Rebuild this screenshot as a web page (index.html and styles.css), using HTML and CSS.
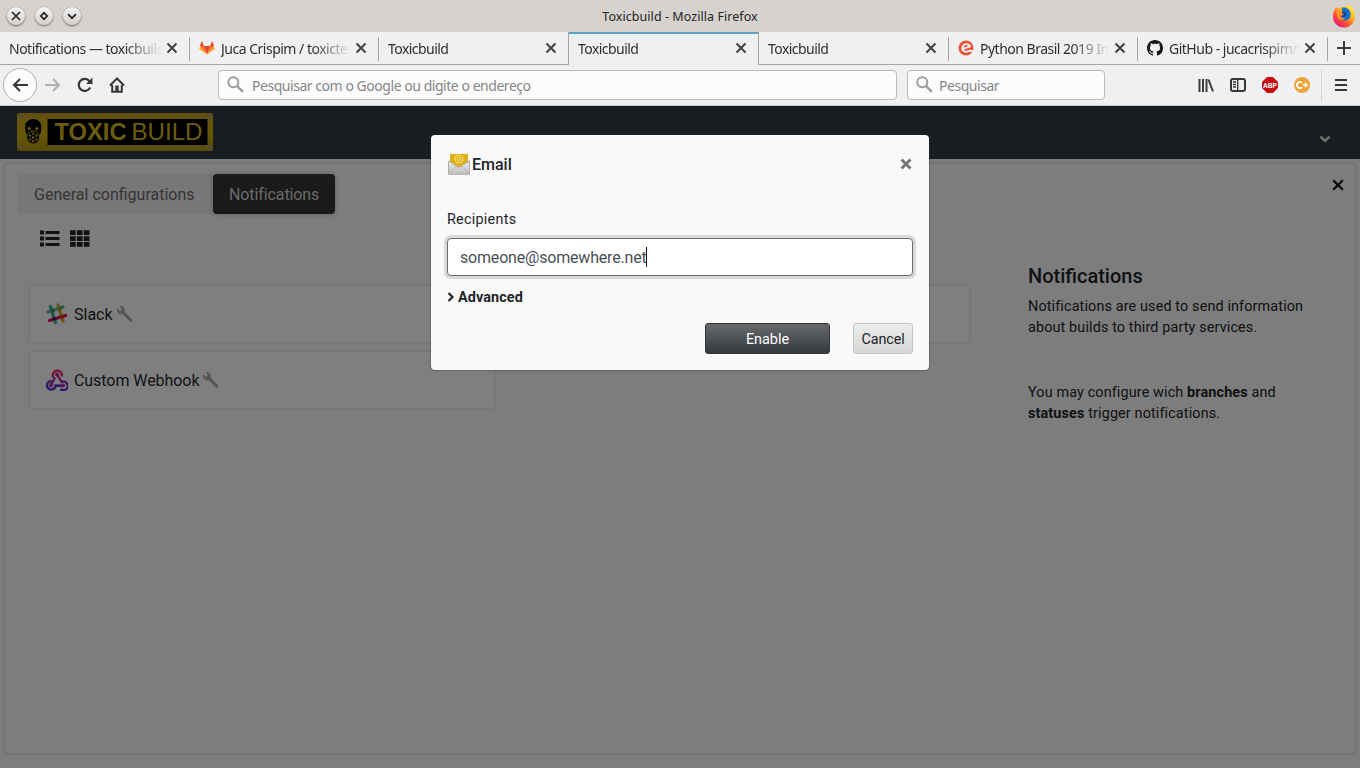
FILE: index.html
```
<!DOCTYPE html>
<html lang="en">
<head>
<meta charset="utf-8">
<title>Toxicbuild</title>
<link rel="stylesheet" href="styles.css">
</head>
<body>
<svg class="defs" aria-hidden="true">
  <defs>
    <symbol id="x" viewBox="0 0 12 12"><path d="M1.500 1.500l9 9M10.500 1.500l-9 9" fill="none" stroke="#3c3d3f" stroke-width="1.900"/></symbol>
    <symbol id="search" viewBox="0 0 18 18"><circle cx="6.300" cy="6.300" r="5" fill="none" stroke="#9b9c9d" stroke-width="2"/><path d="M9.900 9.900l6 6" stroke="#9b9c9d" stroke-width="2.400"/></symbol>
    <symbol id="wrench" viewBox="0 0 512 512"><path fill="#aaa" d="M17.500 110c-24-62-4-80 0-90l70 70 50-15 12-48-70-70c64-16 112 5 142 42 30 40 36 80 20 130l225 225c40 40-25 105-65 65L177 193c-60 23-130 0-160-83z" transform="translate(20 50)"/></symbol>
  </defs>
</svg>
<div class="screen">
  <header class="titlebar">
    <div class="wm">
      <span class="wm-btn"><svg width="10" height="10"><path d="M1 1l8 8M9 1l-8 8"/></svg></span>
      <span class="wm-btn"><svg width="10" height="10"><path d="M5 1.800L8.200 5 5 8.200 1.800 5z"/></svg></span>
      <span class="wm-btn"><svg width="10" height="10"><path d="M1 3.200l4 4 4-4"/></svg></span>
    </div>
    <span class="title">Toxicbuild - Mozilla Firefox</span>
    <svg class="firefox" width="24" height="24" viewBox="0 0 24 24">
      <defs><linearGradient id="fx" x1=".9" y1=".05" x2=".2" y2=".95"><stop offset="0" stop-color="#fff04a"/><stop offset=".4" stop-color="#ffb01f"/><stop offset=".7" stop-color="#ff4a33"/><stop offset="1" stop-color="#e31587"/></linearGradient></defs>
      <path fill="url(#fx)" d="M2.500 5.500L4 2.800l2 2C8 3 10 2.500 12.500 2.500L17 1.200c3.500 2 6 6 6 11A11 11 0 0 1 1 13c0-3 .5-5 1.500-7.500z"/>
      <path fill="#1470cf" d="M10 4c3-1.500 8 1 8.500 5.500.5 4-2 7-6 7-3 0-5-2-5-4l4 .5 1.500-2-3-1.500z"/>
      <path fill="#173f91" d="M9 7.500c3-1 5 .5 5.500 3l-2 2.500-4-.500 3.500-2z"/>
      <path fill="#ff9427" d="M4 6.500c2-1 5-.5 6.500.5L10 9 8 10.500c0 3 2 4 5 3.500-2 3-6 2-7.500-.5z"/>
    </svg>
  </header>
  <nav class="tabs">
    <div class="tab"><span class="tab-name">Notifications — toxicbuild</span><svg class="tx"><use href="#x"/></svg></div>
    <div class="tab"><svg class="fav" viewBox="0 0 16 16"><path fill="#e24329" d="M8 14.500L4.800 6h6.400z"/><path fill="#fc6d26" d="M8 14.500L1 6h4zM8 14.500L15 6h-4z"/><path fill="#fca326" d="M8 14.500L.2 9 1 6zM8 14.500L15.800 9 15 6z"/><path fill="#e24329" d="M1 6l1.800-5L5 6zM15 6l-1.800-5L11 6z"/></svg><span class="tab-name">Juca Crispim / toxicte</span><svg class="tx"><use href="#x"/></svg></div>
    <div class="tab"><span class="tab-name full">Toxicbuild</span><svg class="tx"><use href="#x"/></svg></div>
    <div class="tab active"><span class="tab-name full">Toxicbuild</span><svg class="tx"><use href="#x"/></svg></div>
    <div class="tab"><span class="tab-name full">Toxicbuild</span><svg class="tx"><use href="#x"/></svg></div>
    <div class="tab"><svg class="fav" viewBox="0 0 16 16"><circle cx="8" cy="8" r="7.500" fill="#ec5138"/><path d="M4 9.200L12 6.500C11 3.500 6 3 4.500 7 3.500 11.500 8 13 12 10.500l3 1" fill="none" stroke="#eff0f1" stroke-width="1.900"/></svg><span class="tab-name">Python Brasil 2019 In</span><svg class="tx"><use href="#x"/></svg></div>
    <div class="tab"><svg class="fav" viewBox="0 0 16 16"><path fill="#17181a" d="M8 0C3.580 0 0 3.580 0 8c0 3.540 2.290 6.530 5.470 7.590.4.070.55-.17.55-.38 0-.19-.01-.82-.01-1.490-2.010.37-2.530-.49-2.690-.94-.09-.23-.48-.94-.82-1.130-.28-.15-.68-.52-.01-.53.63-.01 1.080.58 1.230.82.72 1.210 1.870.87 2.330.66.07-.52.28-.87.51-1.070-1.780-.2-3.640-.89-3.640-3.950 0-.87.31-1.590.82-2.150-.08-.2-.36-1.020.08-2.120 0 0 .67-.21 2.200.82.64-.18 1.320-.27 2-.27s1.360.09 2 .27c1.530-1.040 2.200-.82 2.200-.82.44 1.100.16 1.920.08 2.120.51.56.82 1.270.82 2.150 0 3.070-1.870 3.750-3.650 3.950.29.25.54.73.54 1.480 0 1.070-.01 1.930-.01 2.200 0 .21.15.46.55.38A8 8 0 0 0 16 8c0-4.420-3.580-8-8-8z"/></svg><span class="tab-name">GitHub - jucacrispim/t</span><svg class="tx"><use href="#x"/></svg></div>
    <div class="plus"><svg width="14" height="14"><path d="M7 0v14M0 7h14" stroke="#3c3d3f" stroke-width="2"/></svg></div>
  </nav>
  <div class="toolbar">
    <span class="back"><svg width="16" height="14"><path d="M8 1L2 7l6 6M2 7h14" fill="none" stroke="#353638" stroke-width="2"/></svg></span>
    <svg class="fwd" width="16" height="14"><path d="M8 1l6 6-6 6M14 7H0" fill="none" stroke="#aeafb0" stroke-width="2"/></svg>
    <svg class="reload" width="16" height="16"><path d="M13.200 10.500A6 6 0 1 1 12.500 4.200" fill="none" stroke="#353638" stroke-width="2.200"/><path d="M15.500.5V7H9z" fill="#353638"/></svg>
    <svg class="home" width="16" height="16"><path d="M1 8.500L8 1.500l7 7M3.200 8v6.800h9.600V8" fill="none" stroke="#353638" stroke-width="2"/><path d="M6.300 8.500h3.400V14H6.300z" fill="#353638"/></svg>
    <div class="field url"><svg width="18" height="18"><use href="#search"/></svg><span>Pesquisar com o Google ou digite o endereço</span></div>
    <div class="field find"><svg width="18" height="18"><use href="#search"/></svg><span>Pesquisar</span></div>
    <div class="tools">
      <svg width="16" height="16"><path d="M1.500 2v13M5 2v13M8.500 2v13M10.500 2.500l4.500 12" fill="none" stroke="#3c3d3f" stroke-width="2"/></svg>
      <svg width="16" height="16"><rect x="1" y="2" width="14" height="12" rx="2" fill="none" stroke="#353638" stroke-width="2"/><path d="M7.700 2v12M3 5h3M3 7.500h3M3 10h3" stroke="#353638" stroke-width="1.400"/></svg>
      <svg width="16" height="16"><path d="M5 0h6l5 5v6l-5 5H5l-5-5V5z" fill="#c70d12"/><text class="abp" x="1" y="11" textLength="14" lengthAdjust="spacingAndGlyphs">ABP</text></svg>
      <svg width="16" height="16"><circle cx="8" cy="8" r="8" fill="#eca33c"/><path d="M8 5.800A3 3 0 1 0 8 10.200M9 8h5M11.500 5.800v4.400" fill="none" stroke="#fff" stroke-width="1.600"/></svg>
    </div>
    <div class="menu"><svg width="12" height="12"><path d="M0 1h12M0 6h12M0 11h12" stroke="#353638" stroke-width="2"/></svg></div>
  </div>
  <main class="page">
    <div class="navbar">
      <svg class="logo" width="196" height="38" viewBox="0 0 196 38">
        <defs><linearGradient id="gold" x2="0" y2="1"><stop offset="0" stop-color="#c19c26"/><stop offset=".5" stop-color="#d4b40c"/><stop offset="1" stop-color="#b09414"/></linearGradient></defs>
        <rect width="196" height="38" rx="2" fill="url(#gold)"/>
        <rect x="30.500" y="6" width="160" height="26"/>
        <g fill="#a39b80"><circle cx="4" cy="4" r="2"/><circle cx="4" cy="34" r="2"/><circle cx="192" cy="4" r="2"/><circle cx="192" cy="34" r="2"/></g>
        <path d="M8 14c0-5 4-8 8.300-8s8.200 3 8.200 8c0 4-1 7-2.500 9-1 4-3 8-5.700 8s-5-4-5.800-8C9 21 8 18 8 14z"/>
        <circle cx="12.300" cy="15.500" r="1.600" fill="#d2b80b"/><circle cx="19.800" cy="15.500" r="1.600" fill="#d2b80b"/>
        <circle cx="16.200" cy="24.500" r="6.500" stroke="#c2a80b"/>
        <g fill="#c2a80b"><circle cx="16.200" cy="24.500" r="1.300"/><circle cx="13" cy="22.500" r="1.200"/><circle cx="19.400" cy="22.500" r="1.200"/><circle cx="13" cy="26.500" r="1.200"/><circle cx="19.400" cy="26.500" r="1.200"/><circle cx="16.200" cy="20.800" r="1.200"/><circle cx="16.200" cy="28.200" r="1.200"/></g>
        <text class="lg b" x="37.500" y="27.300" textLength="72" lengthAdjust="spacingAndGlyphs">TOXIC</text>
        <text class="lg" x="114.500" y="27.300" textLength="71" lengthAdjust="spacingAndGlyphs">BUILD</text>
      </svg>
      <svg class="chev" width="12" height="8"><path d="M1.500 1.500L6 6l4.500-4.500" fill="none" stroke="#d8dadb" stroke-width="2.600"/></svg>
    </div>
    <section class="panel">
      <div class="left">
        <div class="pills"><span class="pill">General configurations</span><span class="pill on">Notifications</span></div>
        <div class="views">
          <svg width="20" height="17"><path d="M0 .5h4v4H0zM0 6.500h4v4H0zM0 12.500h4v4H0zM5.500 1h14v3h-14zM5.500 7h14v3h-14zM5.500 13h14v3h-14z"/></svg>
          <svg width="20" height="17"><path d="M0 .3h5.700v4.700H0zM6.900.3h5.700v4.700H6.900zM13.800.3h5.700v4.700h-5.700zM0 6.200h5.700v4.700H0zM6.900 6.200h5.700v4.700H6.900zM13.800 6.200h5.700v4.700h-5.700zM0 12.100h5.700v4.700H0zM6.900 12.100h5.700v4.700H6.900zM13.800 12.100h5.700v4.700h-5.700z"/></svg>
        </div>
        <div class="cards">
          <div class="card">
            <svg width="22" height="22" viewBox="0 0 22 22"><g fill="none" stroke-width="3.400" stroke-linecap="round"><path d="M4.500 3.500l5 16" stroke="#3eb890"/><path d="M12 2l5 16" stroke="#e0a82e"/><path d="M2 9l15-5" stroke="#62bda0"/><path d="M3.500 17.500l16-5" stroke="#d41758"/></g><path d="M6 14.800l3-1 1 3-3 1z" fill="#4d1d50"/><path d="M13.500 12.500l3-1 1 3-3 1z" fill="#d5352a"/><path d="M4.800 6.600l2.800-.9 1 3-2.900.9z" fill="#24887a"/><path d="M12.300 4.200l2.900-.9 1 3-2.900.9z" fill="#7a9c3e"/></svg>
            <span>Slack</span><svg class="wr"><use href="#wrench"/></svg>
          </div>
          <div class="card"></div>
          <div class="card">
            <svg width="22" height="22" viewBox="0 0 22 22"><defs><linearGradient id="wh" x2="0" y2="1"><stop offset=".15" stop-color="#ff2c70"/><stop offset=".75" stop-color="#5a35d6"/></linearGradient></defs><g fill="none" stroke="url(#wh)" stroke-width="2.400"><path d="M15.500 7.500A4.400 4.400 0 1 0 8.500 9.500L5 16M11 5.500l4.500 7.500A4.300 4.300 0 1 1 14.500 20M5.500 12A4.300 4.300 0 1 0 9.500 16.500L17 16.700"/></g><g fill="#b02ca8"><circle cx="11" cy="5.500" r="2"/><circle cx="5" cy="16.300" r="2"/><circle cx="17" cy="16.500" r="2"/></g></svg>
            <span class="hook">Custom Webhook</span><svg class="wr"><use href="#wrench"/></svg>
          </div>
        </div>
      </div>
      <aside class="help">
        <svg class="close" width="12" height="12"><path d="M1.200 1.200l9.600 9.600M10.800 1.200l-9.600 9.600" stroke="#111" stroke-width="2.300"/></svg>
        <h2>Notifications</h2>
        <p>Notifications are used to send information<br>about builds to third party services.</p>
        <p class="second">You may configure wich <b>branches</b> and<br><b>statuses</b> trigger notifications.</p>
      </aside>
    </section>
    <div class="backdrop">
      <div class="modal">
        <div class="mhead">
          <svg width="24" height="24" viewBox="0 0 24 24"><defs><linearGradient id="env" x2="0" y2="1"><stop offset="0" stop-color="#eee"/><stop offset="1" stop-color="#bdbdbd"/></linearGradient></defs><path d="M1 10L4 7h16l3 3v11.500q0 1-1 1H2q-1 0-1-1z" fill="#b5b5b5"/><path d="M3 2h18v10l-9 6-9-6z" fill="#e0b01c"/><circle cx="12" cy="7" r="4" fill="none" stroke="#f8dd70"/><circle cx="12" cy="7" r="1.600" fill="none" stroke="#f8dd70"/><path d="M1.500 9L12 15.500 22.500 9v13.300h-21z" fill="url(#env)" stroke="#aaa" stroke-width=".8"/><path d="M2 21.500l7.500-7.500M22 21.500L14.500 14" stroke="#aaa" stroke-width=".7"/></svg>
          <span>Email</span>
          <svg class="mx" width="12" height="12"><path d="M1.500 1.500l9 9M10.500 1.500l-9 9" stroke="#757575" stroke-width="2.900"/></svg>
        </div>
        <div class="label">Recipients</div>
        <div class="input"><span>someone@somewhere.net</span><i class="caret"></i></div>
        <div class="adv"><svg width="8" height="10"><path d="M1.500 1l4 4-4 4" fill="none" stroke="#212529" stroke-width="2.200"/></svg><span>Advanced</span></div>
        <div class="actions"><span class="btn dark">Enable</span><span class="btn light">Cancel</span></div>
      </div>
    </div>
  </main>
</div>
</body>
</html>
```
FILE: styles.css
```
* { box-sizing: border-box; }
body { margin: 0; font-family: Roboto, sans-serif; color: #212529; }
svg { display: block; flex: none; }
.defs { position: absolute; width: 0; height: 0; }
.screen { width: 1360px; height: 768px; display: flex; flex-direction: column; overflow: hidden; white-space: nowrap; }

.titlebar { height: 32px; flex: none; background: #d6d2cf; display: grid; grid-template-columns: 1fr auto 1fr; align-items: center; font: 12.5px "Noto Sans", sans-serif; color: #252525; }
.title { letter-spacing: .06px; }
.wm { display: flex; gap: 10px; padding-left: 7px; }
.wm-btn { width: 18px; height: 18px; border-radius: 50%; background: linear-gradient(#f7f6f5, #d2cecb); box-shadow: 0 1px 2px #6c6967, 0 0 1px #8a8784; display: grid; place-items: center; }
.wm-btn path { fill: none; stroke: #242424; stroke-width: 1.7; }
.firefox { justify-self: end; margin-right: 4px; }

.tabs { height: 33px; flex: none; background: #eff0f1; display: grid; grid-template-columns: 190px 189px 189px 191px 190px 189px 190px 1fr; font: 14px "Noto Sans", sans-serif; color: #2d2f31; }
.tab { display: flex; align-items: center; padding: 0 12px 0 9px; border-bottom: 1px solid #a5a6a7; background: linear-gradient(#a5a6a7, #a5a6a7) right 5px / 1px 24px no-repeat; min-width: 0; }
.tab:nth-child(3), .tab:nth-child(4) { background: none; }
.tab.active { border: 1px solid #a5a6a7; border-top: 0; border-bottom: 0; box-shadow: inset 0 2px #5aa2c4; padding: 0 11px 1px 9px; }
.tab:nth-child(3) { padding-right: 11px; }
.tab-name { flex: 1; min-width: 0; letter-spacing: -.5px; margin-right: 0; -webkit-mask-image: linear-gradient(to right, #000 calc(100% - 42px), transparent calc(100% - 4px)); mask-image: linear-gradient(to right, #000 calc(100% - 42px), transparent calc(100% - 4px)); }
.tab-name.full { letter-spacing: -.55px; }
.fav { width: 16px; height: 16px; margin-right: 6px; }
.tx { width: 12px; height: 12px; }
.plus { border-bottom: 1px solid #a5a6a7; display: grid; place-items: center; }

.toolbar { height: 41px; flex: none; background: #eff0f1; border-bottom: 1px solid #c8c9ca; display: flex; align-items: center; padding-left: 3px; }
.back { width: 34px; height: 34px; border: 1px solid #aeafb0; border-radius: 50%; background: #fcfcfc; display: grid; place-items: center; }
.fwd { margin-left: 8px; }
.reload { margin-left: 16px; }
.home { margin-left: 16px; }
.field { height: 30px; border: 1px solid #b8b9ba; border-radius: 4px; background: #fcfcfc; display: flex; align-items: center; gap: 7px; padding-left: 8px; font: 14px "Noto Sans", sans-serif; color: #858687; }
.url { width: 679px; margin-left: 93px; }
.find { width: 198px; margin-left: 10px; gap: 5px; }
.field span { letter-spacing: -.46px; }
.tools { display: flex; gap: 16px; margin-left: 93px; }
.abp { font: bold 7.5px "Liberation Sans", sans-serif; fill: #fff; }
.menu { height: 33px; margin-left: 11px; padding-left: 13px; border-left: 1px solid #d6d7d8; display: flex; align-items: center; }

.page { flex: 1; position: relative; background: #fafafa; display: flex; flex-direction: column; }
.navbar { height: 53px; flex: none; background: #343a40; display: flex; align-items: flex-start; justify-content: space-between; padding: 7px 29px 0 17px; }
.chev { margin-top: 22px; }
.lg { font: 24px "Liberation Sans", sans-serif; fill: #d8b81e; }
.lg.b { font-weight: bold; }
.panel { height: 589px; margin: 5px 5px 0; border-radius: 3px; box-shadow: 0 0 3px 1px #d8d8d8; display: flex; justify-content: space-between; }
.left { width: 965px; padding: 10px 0 0 13px; }
.pills { display: flex; font-size: 16px; }
.pill { height: 40px; line-height: 41px; padding: 0 16px; border-radius: 4px; background: #f1edf0; color: #6b6b6b; box-shadow: 0 0 3px #eee; width: 195px; }
.pill.on { width: 122px; background: #343434; color: #d4d4d4; box-shadow: 0 0 5px #bbb; letter-spacing: -.1px; }
.views { display: flex; gap: 10px; margin: 16px 0 0 22px; }
.views path { fill: #212529; }
.cards { display: grid; grid-template-columns: 464px 463px; gap: 10px 12px; margin: 39px 0 0 12px; }
.card { height: 56px; border-radius: 4px; background: #fff; box-shadow: 0 0 3px 1px #e4e4e4; display: flex; align-items: center; padding-left: 17px; }
.card span { margin-left: 5px; }
.card .hook { letter-spacing: -.06px; }
.card svg:first-child { margin-left: -1px; margin-right: 1px; }
.wr { width: 17px; height: 17px; margin-left: 3px; }
.help { width: 327px; display: flex; flex-direction: column; }
.close { align-self: flex-end; margin: 15px 11px 0 0; }
.help h2 { margin: 73px 0 0; font-size: 20px; font-weight: 500; line-height: 24px; }
.help p { margin: 8px 0 0; font-size: 14.4px; line-height: 21px; letter-spacing: .13px; }
.help .second { margin-top: 44px; }

.backdrop { position: absolute; inset: 0; background: rgba(0, 0, 0, .5); display: flex; justify-content: center; align-items: flex-start; padding-top: 29px; }
.modal { width: 498px; height: 235px; border-radius: 4px; background: #f9f9f9; box-shadow: 0 0 2px #333; padding: 17px 16px 0; }
.mhead { display: flex; align-items: center; height: 24px; font-size: 16px; font-weight: 500; }
.mhead span { flex: 1; margin-left: 1px; }
.mx { margin-right: 1px; }
.label { margin-top: 33px; font-size: 14.4px; line-height: 22px; letter-spacing: .25px; }
.input { height: 38px; margin-top: 7px; border: 1px solid #6c6c6c; border-radius: 4px; background: #fff; box-shadow: 0 0 0 3px #d9d9d9; padding-left: 12px; display: flex; align-items: center; font-size: 16px; letter-spacing: -.19px; color: #495057; }
.caret { width: 1px; height: 20px; background: #111; }
.adv { display: flex; align-items: center; gap: 3px; margin-top: 10px; height: 22px; font-size: 14.4px; font-weight: 700; letter-spacing: .1px; }
.actions { display: flex; justify-content: flex-end; gap: 23px; margin-top: 15px; }
.btn { height: 31px; line-height: 31px; border: 1px solid #30343a; border-radius: 3px; text-align: center; font-size: 14.4px; }
.dark { width: 125px; color: #fff; background: linear-gradient(#68696b, #343a40); }
.light { width: 60px; background: linear-gradient(#ededed, #d4d5d5); border-color: #c3c4c4; letter-spacing: -.1px; }
```
